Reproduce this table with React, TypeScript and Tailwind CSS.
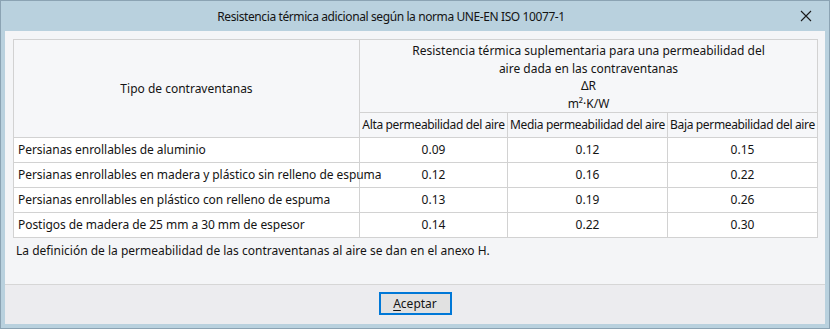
import React from 'react';

type Row = {
  tipo: string;
  alta: string;
  media: string;
  baja: string;
};

const rows: Row[] = [
  { tipo: 'Persianas enrollables de aluminio', alta: '0.09', media: '0.12', baja: '0.15' },
  { tipo: 'Persianas enrollables en madera y plástico sin relleno de espuma', alta: '0.12', media: '0.16', baja: '0.22' },
  { tipo: 'Persianas enrollables en plástico con relleno de espuma', alta: '0.13', media: '0.19', baja: '0.26' },
  { tipo: 'Postigos de madera de 25 mm a 30 mm de espesor', alta: '0.14', media: '0.22', baja: '0.30' },
];

const CloseIcon = () => (
  <svg width="12" height="12" viewBox="0 0 12 12" className="block">
    <path d="M1 1 L11 11 M11 1 L1 11" stroke="#1a1a1a" strokeWidth="1.1" fill="none" />
  </svg>
);

export default function App() {
  const cell = 'border border-[#d2d2d2] h-[25px] p-0 leading-[16px]';

  return (
    <div
      className="w-[830px] h-[329px] border border-[#8ba3b3] bg-[#b9d1de] flex flex-col text-[12px] text-[#141414]"
      style={{ fontFamily: '"Noto Sans", "Open Sans", sans-serif' }}
    >
      {/* title bar */}
      <div className="h-[30px] flex items-center shrink-0">
        <div className="w-[780px] text-center pt-[1px] tracking-[-0.4px]">
          Resistencia térmica adicional según la norma UNE-EN ISO 10077-1
        </div>
        <div className="flex-1 flex justify-center pl-[2px]">
          <CloseIcon />
        </div>
      </div>

      {/* client area */}
      <div className="mx-[4px] h-[293px] flex flex-col shrink-0">
        <div className="h-[253px] bg-[#f4f5f7] pt-[8px] pl-[8px]">
          <table className="table-fixed border-collapse w-[804px]">
            <colgroup>
              <col className="w-[346px]" />
              <col className="w-[148px]" />
              <col className="w-[160px]" />
              <col className="w-[150px]" />
            </colgroup>
            <thead>
              <tr className="bg-[#f6f7f9]">
                <th rowSpan={2} className={`${cell} font-normal text-center`}>
                  Tipo de contraventanas
                </th>
                <th colSpan={3} className="border border-[#d2d2d2] h-[73px] p-0 pt-[2px] font-normal text-center leading-[17.5px]">
                  <div>Resistencia térmica suplementaria para una permeabilidad del</div>
                  <div>aire dada en las contraventanas</div>
                  <div>ΔR</div>
                  <div>m²·K/W</div>
                </th>
              </tr>
              <tr className="bg-[#f6f7f9]">
                <th className={`${cell} font-normal text-center whitespace-nowrap tracking-[-0.35px]`}>Alta permeabilidad del aire</th>
                <th className={`${cell} font-normal text-center whitespace-nowrap tracking-[-0.35px]`}>Media permeabilidad del aire</th>
                <th className={`${cell} font-normal text-center whitespace-nowrap tracking-[-0.35px]`}>Baja permeabilidad del aire</th>
              </tr>
            </thead>
            <tbody className="bg-white">
              {rows.map((r) => (
                <tr key={r.tipo}>
                  <td className={`${cell} pl-[4px] whitespace-nowrap tracking-[-0.05px]`}>{r.tipo}</td>
                  <td className={`${cell} text-center`}>{r.alta}</td>
                  <td className={`${cell} text-center`}>{r.media}</td>
                  <td className={`${cell} text-center`}>{r.baja}</td>
                </tr>
              ))}
            </tbody>
          </table>
          <p className="mt-[5px] pl-[3px] leading-[16px]">
            La definición de la permeabilidad de las contraventanas al aire se dan en el anexo H.
          </p>
        </div>
        <div className="h-[1px] bg-[#d6d6d6]" />
        <div className="flex-1 bg-[#ececef] flex justify-center pt-[7px]">
          <button className="w-[73px] h-[23px] border-2 border-[#0078d7] bg-[#e1e1e1] leading-[16px] text-[#141414]">
            <span className="underline underline-offset-2">A</span>ceptar
          </button>
        </div>
      </div>
    </div>
  );
}
